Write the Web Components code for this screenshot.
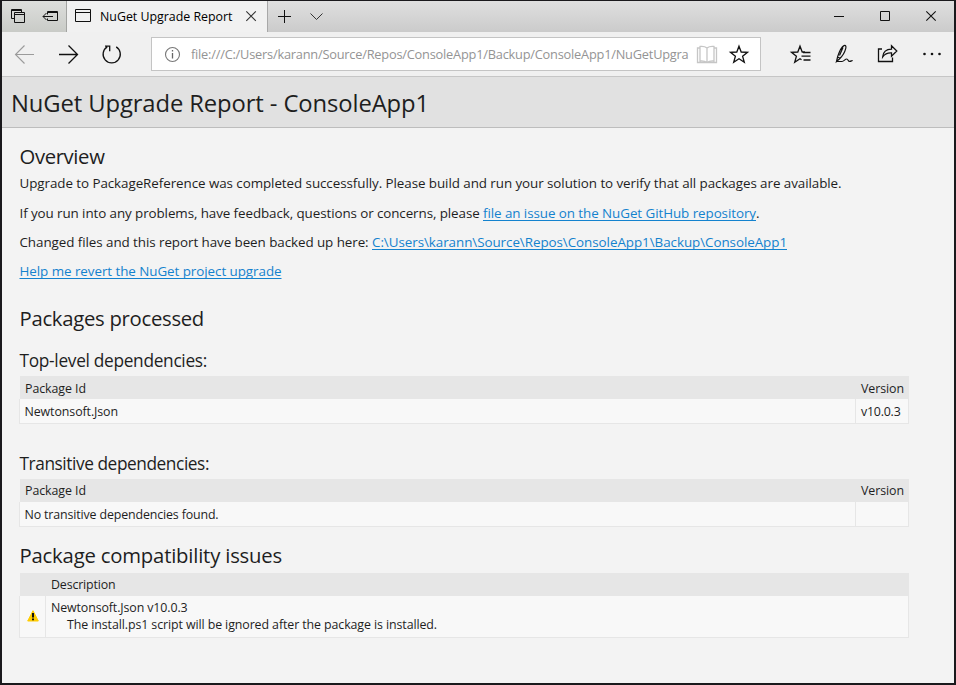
<!DOCTYPE html>
<html lang="en">
<head>
<meta charset="utf-8">
<title>NuGet Upgrade Report</title>
<style>
html,body{margin:0;height:100%}
body{font-family:"Open Sans","Noto Sans",sans-serif;color:#1e1e1e;overflow:hidden}
</style>
</head>
<body>
<browser-window>
  <tab-strip slot="tabs"></tab-strip>
  <nav-bar slot="nav"></nav-bar>
  <upgrade-report></upgrade-report>
</browser-window>
<script>
const define = (name, html, init) => {
  const t = document.createElement('template');
  t.innerHTML = html;
  customElements.define(name, class extends HTMLElement {
    connectedCallback() {
      if (this.shadowRoot) return;
      this.attachShadow({mode: 'open'}).append(t.content.cloneNode(true));
      if (init) init(this, this.shadowRoot);
    }
  });
};

/* A run of text tracked so that it takes the width given in "w". */
define('text-run', `<style>
:host{display:inline-block;white-space:pre;vertical-align:top}
</style><slot></slot>`, el => {
  const w = parseFloat(el.getAttribute('w'));
  const n = el.textContent.length;
  const natural = el.getBoundingClientRect().width;
  el.style.letterSpacing = ((w - natural) / n).toFixed(4) + 'px';
});

define('browser-window', `<style>
:host{display:flex;flex-direction:column;box-sizing:border-box;width:956px;height:685px;
border:2px solid #1a191c;border-top-width:1px;background:#f3f3f3}
</style><slot name="tabs"></slot><slot name="nav"></slot><slot></slot>`);

define('tab-strip', `<style>
:host{display:flex;height:31px;background:linear-gradient(#dfdfdf,#cbcbcb)}
svg{display:block;fill:none;stroke:#111;stroke-width:1}
.set{width:64px;border-right:1px solid #a3a4a2;background:linear-gradient(#dddedc,#c9cbc7);box-sizing:content-box}
.tab{width:200px;display:flex;background:#f1f1f1;border-right:1px solid #a8a8a8}
.t{font-size:12.4px;line-height:31px;width:134px;color:#000}
.sp{flex:1}
</style>
<div class="set"><svg width="64" height="31" viewBox="2 1 64 31">
<path d="M14.500 18.500h-3v-9h10v3M11 10.500h11M14.500 12.500h10v10h-10zM14 14.500h11"/>
<path d="M47.500 14.500v-3h10v9h-10v-2M47 12.500h11M43 16.500h10M46.500 13l-3.500 3.500 3.500 3.500"/></svg></div>
<div class="tab">
<svg width="33" height="31" viewBox="67 1 33 31"><path d="M75.500 9.500h15v12h-15zM75 12.500h16"/></svg>
<div class="t"><text-run w="132.500">NuGet Upgrade Report</text-run></div>
<svg width="33" height="31" viewBox="234 1 33 31"><path stroke="#333" stroke-width="1.100" d="M246.300 11.300l9.500 9.500M255.800 11.300l-9.500 9.500"/></svg>
</div>
<svg width="70" height="31" viewBox="268 1 70 31"><path d="M278 16.500h13M284.500 10v13"/><path stroke="#333" d="M310.500 13.500l6 6 6-6"/></svg>
<div class="sp"></div>
<svg width="134" height="31" viewBox="820 1 134 31"><path d="M834 16.500h10M880.500 11.500h9v9h-9z"/><path d="M926.300 11.300l9.400 9.400M935.700 11.300l-9.400 9.400" stroke-width="1.100"/></svg>`);

define('nav-bar', `<style>
:host{display:flex;height:44px;background:#f0f0f0;border-bottom:1px solid #c6c6c6}
svg{display:block;fill:none;stroke:#111;stroke-width:1.3;flex:none}
.addr{box-sizing:border-box;width:610px;height:34px;margin-top:5px;border:1px solid #c4c4c4;background:#fff;display:flex}
.url{width:498px;margin-left:-1px;overflow:hidden;font-size:12.8px;line-height:33px;height:32px;color:#949494}
</style>
<svg width="149" height="44" viewBox="2 32 149 44">
<path stroke="#9b9b9b" stroke-width="1.100" d="M15.500 54.500H34M24.500 45.500l-9 9 9 9"/>
<path d="M59 54.500h18.500M68.500 45.500l9 9-9 9"/>
<path d="M107.200 46.900a8.600 8.600 0 1 0 9 0M105 46.200h4.700v5"/></svg>
<div class="addr">
<svg width="40" height="32" viewBox="152 38 40 32"><circle cx="172.500" cy="54.500" r="7" stroke="#777" stroke-width="1.100"/><path stroke="#666" d="M172.500 53v5.500M172.500 50v1.500"/></svg>
<div class="url"><text-run w="497.500">file:///C:/Users/karann/Source/Repos/ConsoleApp1/Backup/ConsoleApp1/NuGetUpgra</text-run></div>
<svg width="71" height="32" viewBox="689 38 71 32">
<path stroke="#c6c6c6" d="M707 48c-2-1.600-4-1.800-7-1.500v14.500c3-.3 5 0 7 1.500 2-1.500 4-1.800 7-1.500V46.500c-3-.3-5-.1-7 1.500v14M699.500 48h-2v14.500h19V48h-2"/>
<path d="M739 46.200l2.200 5.800 6.300.300-4.900 3.900 1.700 6-5.300-3.400-5.300 3.400 1.700-6-4.900-3.900 6.300-.3z"/></svg>
</div>
<svg width="193" height="44" viewBox="761 32 193 44">
<path d="M805 52h-2.800l-2.200-5.800-2.200 5.800-6.300.3 4.900 3.900-1.700 6 5.300-3.400 1.500 1M803 52.500h7.500M801.500 56.200h9M803.500 60h7"/>
<path stroke-width="1.200" d="M836.500 61.500l1.200-5c1.500-4.500 3.800-9.700 6.300-10.900 1.800-.8 2.300.8 1.700 3-.9 3.600-3.700 7.900-6.300 10.400zM837.500 57l2.700 1.200M843 47.500l-3.500 8M836.500 61.500h5.500c2 0 3-2.500 4.700-2.500 1.800 0 1 2.400 3 2.400 1.200 0 2.200-.9 3-.9"/>
<path d="M882 49h-3.500v12.500h14v-4M891.500 45.800l5.300 5.200-5.300 5.200v-3.400c-4-.2-6.700 1-8.800 4 .4-4.500 3.500-7.600 8.800-7.700z"/>
<g fill="#111" stroke="none"><circle cx="924.500" cy="54" r="1.300"/><circle cx="932" cy="54" r="1.300"/><circle cx="939.500" cy="54" r="1.300"/></g></svg>`);

/* Two-column table: header cells and body cells come from the user's slots. */
define('report-table', `<style>
:host{display:block;width:890px;font-size:12.4px}
.row{display:grid;grid-template-columns:var(--cols)}
.head{box-sizing:border-box;height:23px;line-height:23px;margin-left:1px;background:#e6e6e6;padding-top:var(--nudge,0px)}
.head div{padding-left:5px;margin-left:-1px}
.head div+div{padding-left:6px}
.head div:first-child{padding-left:6px}
.body{box-sizing:border-box;min-height:var(--h,25px);background:#f8f8f8;border:1px solid #e6e6e6;border-top:0;line-height:var(--lh,26px)}
.body div{height:calc(var(--h,25px) - 1px);padding-left:4.500px}
.body div+div{padding-left:5px;margin-left:-1px;border-left:1px solid #e6e6e6}
</style>
<div class="row head"><div><slot name="h1"></slot></div><div><slot name="h2"></slot></div></div>
<div class="row body"><div><slot name="c1"></slot></div><div><slot name="c2"></slot></div></div>`);

define('warning-icon', `<style>:host{display:block;height:41px;padding:13px 0 0 2px;box-sizing:border-box}svg{display:block}</style>
<svg width="12" height="13" viewBox="0 0 12 13"><path fill="#fc0" stroke="#fc0" stroke-linejoin="round" d="M6 1.700L11.300 12H.7z"/><path stroke="#111" stroke-width="2" d="M6 4v4.500M6 9.500v1.700"/></svg>`);

define('upgrade-report', `<style>
:host{display:block}
header{height:50px;background:#e1e1e1;border-bottom:1px solid #bdbdbd;padding-left:9px;font-size:23.8px;line-height:52px}
h1,h2,h3,p{margin:0;font-weight:400;font-size:inherit}
main{padding:14px 0 0 17px}
h2{font-size:20.3px;line-height:28px;height:28px;padding-left:.5px}
h3{font-size:17.3px;line-height:26px;height:24px;padding-left:.5px}
p{font-size:13.4px;line-height:20px;height:20px;padding-left:.5px;display:flex}
a{color:#1382ce;text-decoration:underline;text-underline-offset:2px;text-decoration-thickness:1px;text-decoration-skip-ink:none}
a text-run{text-decoration:inherit}
.dep{--cols:836px 1fr}
.iss{--cols:26px 1fr;--h:42px;--lh:17px}
.msg{display:block;line-height:17px;padding-top:3px}
.msg span{display:block}
</style>
<header><h1><text-run w="418">NuGet Upgrade Report - ConsoleApp1</text-run></h1></header>
<main>
<h2><text-run w="85">Overview</text-run></h2>
<p style="margin-top:3px"><text-run w="822">Upgrade to PackageReference was completed successfully. Please build and run your solution to verify that all packages are available.</text-run></p>
<p style="margin-top:10px"><text-run w="463.500">If you run into any problems, have feedback, questions or concerns, please </text-run><a><text-run w="273">file an issue on the NuGet GitHub repository</text-run></a>.</p>
<p style="margin-top:9px"><text-run w="352.500">Changed files and this report have been backed up here: </text-run><a><text-run w="415">C:\\Users\\karann\\Source\\Repos\\ConsoleApp1\\Backup\\ConsoleApp1</text-run></a></p>
<p style="margin-top:9px"><a><text-run w="262">Help me revert the NuGet project upgrade</text-run></a></p>
<h2 style="margin-top:23px"><text-run w="184.500">Packages processed</text-run></h2>
<h3 style="margin-top:16px"><text-run w="187.500">Top-level dependencies:</text-run></h3>
<report-table class="dep" style="margin-top:4px;--nudge:1px"><text-run slot="h1" w="61">Package Id</text-run><text-run slot="h2" w="43">Version</text-run><text-run slot="c1" w="93.500">Newtonsoft.Json</text-run><text-run slot="c2" w="39.500">v10.0.3</text-run></report-table>
<h3 style="margin-top:27px"><text-run w="189.500">Transitive dependencies:</text-run></h3>
<report-table class="dep" style="margin-top:4px"><text-run slot="h1" w="61">Package Id</text-run><text-run slot="h2" w="43">Version</text-run><text-run slot="c1" w="194">No transitive dependencies found.</text-run></report-table>
<h2 style="margin-top:14px"><text-run w="262.500">Package compatibility issues</text-run></h2>
<report-table class="iss" style="margin-top:4px"><text-run slot="h2" w="64.500">Description</text-run><warning-icon slot="c1"></warning-icon><div class="msg" slot="c2"><span><text-run w="136.500">Newtonsoft.Json v10.0.3</text-run></span><span style="padding-left:16px"><text-run w="370">The install.ps1 script will be ignored after the package is installed.</text-run></span></div></report-table>
</main>`);
</script>
</body>
</html>
